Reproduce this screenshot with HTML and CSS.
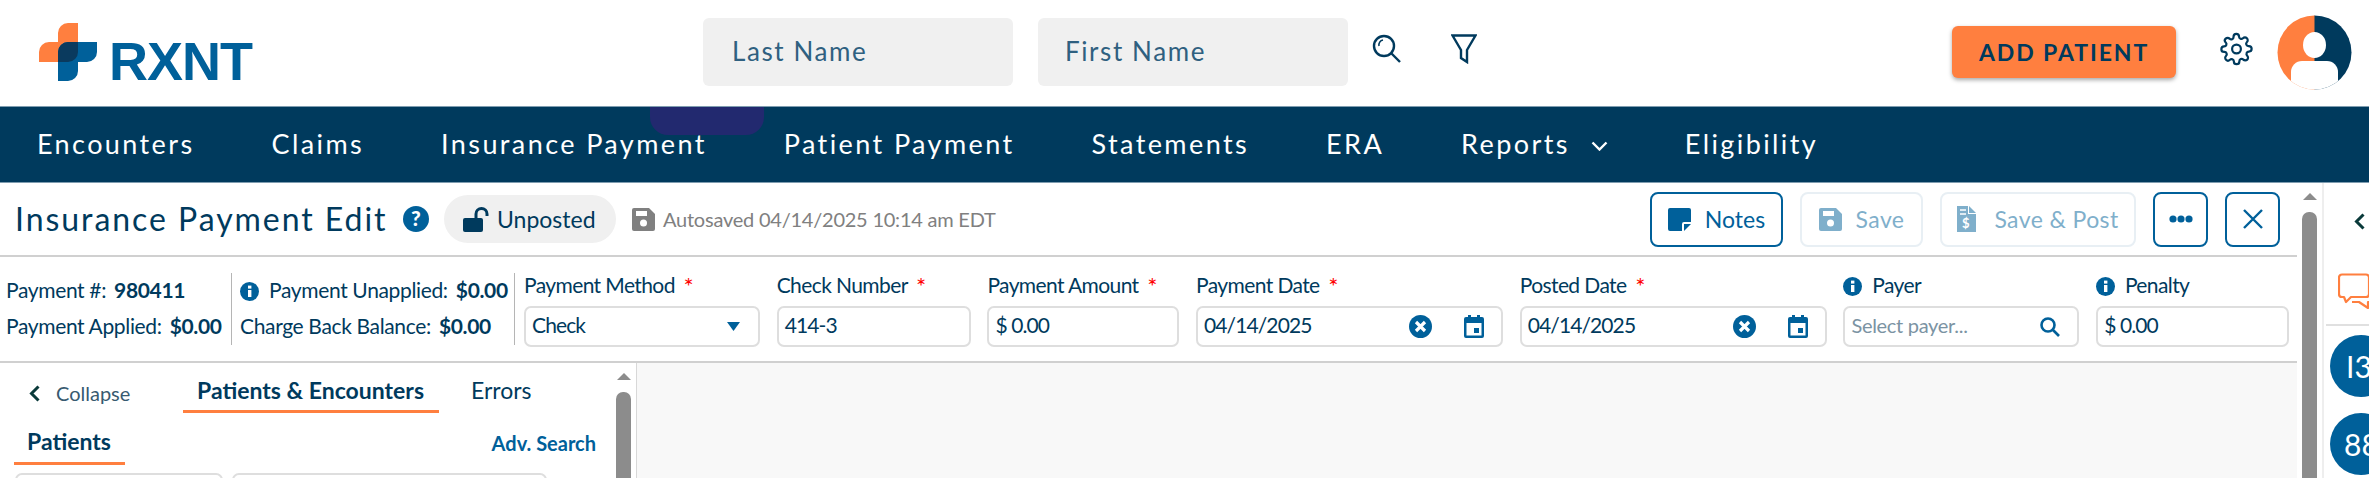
FILE: index.html
```html
<!DOCTYPE html>
<html lang="en">
<head>
    <meta charset="UTF-8">
    <title>Insurance Payment Edit</title>
    <link rel="stylesheet" href="styles.css">
</head>
<body>

<header class="topbar">
    <div class="logo">
        <svg width="58" height="58" viewBox="0 0 58 58">
            <path fill="#ff7f3f" d="M29 0H39V29a10 10 0 0 1-10 10H0V29a10 10 0 0 1 10-10H19V10a10 10 0 0 1 10-10z"/>
            <path fill="#00609a" d="M29 19H58V29a10 10 0 0 1-10 10H39V48a10 10 0 0 1-10 10H19V29a10 10 0 0 1 10-10z"/>
            <path fill="#0a3a5e" d="M29 19H39V29a10 10 0 0 1-10 10H19V29a10 10 0 0 1 10-10z"/>
        </svg>
        <span class="logo-text">RXNT</span>
    </div>
    <div class="top-search">
        <div class="name-box name-last">Last Name</div>
        <div class="name-box name-first">First Name</div>
        <svg class="search-glass" width="30" height="30" viewBox="0 0 30 30" fill="none" stroke="#003a5d" stroke-width="2.4">
            <ellipse cx="12" cy="12" rx="10" ry="10"/>
            <path d="M19 19l9 9"/>
            <path d="M7 12a5 5 0 0 1 4-6" stroke-width="1.6"/>
        </svg>
        <svg class="funnel" width="26" height="30" viewBox="0 0 26 30" fill="none" stroke="#003a5d" stroke-width="2.4">
            <path d="M1.5 1.5H24.5L16 16V28L10 24V16z"/>
        </svg>
    </div>
    <div class="top-actions">
        <div class="add-patient">ADD PATIENT</div>
        <svg class="gear" width="33" height="34" viewBox="0 0 24 24" fill="none" stroke="#003a5d" stroke-width="1.6" stroke-linejoin="round">
            <circle cx="12" cy="12" r="3.2"/>
            <path d="M19.4 15a1.65 1.65 0 0 0 .33 1.82l.06.06a2 2 0 1 1-2.83 2.83l-.06-.06a1.65 1.65 0 0 0-2.82 1.17V21a2 2 0 1 1-4 0v-.09a1.65 1.65 0 0 0-2.82-1.11l-.06.06a2 2 0 1 1-2.83-2.83l.06-.06a1.65 1.65 0 0 0-1.17-2.82H3a2 2 0 1 1 0-4h.09a1.65 1.65 0 0 0 1.11-2.82l-.06-.06a2 2 0 1 1 2.83-2.83l.06.06a1.65 1.65 0 0 0 2.82-1.17V3a2 2 0 1 1 4 0v.09a1.65 1.65 0 0 0 2.82 1.11l.06-.06a2 2 0 1 1 2.83 2.83l-.06.06a1.65 1.65 0 0 0 1.17 2.82H21a2 2 0 1 1 0 4h-.09a1.65 1.65 0 0 0-1.51 1z"/>
        </svg>
        <svg class="avatar" width="75" height="75" viewBox="0 0 75 75">
            <defs><clipPath id="avatar-clip"><circle cx="37.5" cy="37.5" r="37"/></clipPath></defs>
            <g clip-path="url(#avatar-clip)">
                <rect width="38" height="75" fill="#ff7f3f"/>
                <rect x="37.5" width="38" height="75" fill="#003a5d"/>
                <ellipse cx="37.5" cy="30" rx="11.5" ry="13" fill="#fff"/>
                <path fill="#fff" d="M14 75V57a11 11 0 0 1 11-11H50a11 11 0 0 1 11 11V75z"/>
            </g>
        </svg>
    </div>
</header>

<nav class="mainnav">
    <a>Encounters</a>
    <a>Claims</a>
    <a>Insurance Payment</a>
    <a>Patient Payment</a>
    <a>Statements</a>
    <a>ERA</a>
    <a class="has-menu">Reports<svg width="17" height="10" viewBox="0 0 17 10" fill="none" stroke="#fff" stroke-width="2.4"><path d="M1.5 1.5l7 7 7-7"/></svg></a>
    <a>Eligibility</a>
    <span class="nav-smudge"></span>
</nav>

<div class="workspace">
    <main class="main">
        <div class="title-row">
            <h1>Insurance Payment Edit</h1>
            <svg class="help" width="26" height="26" viewBox="0 0 26 26">
                <circle cx="13" cy="13" r="13" fill="#00609a"/>
                <text x="13" y="20" text-anchor="middle" class="help-mark">?</text>
            </svg>
            <div class="status-pill">
                <svg width="26" height="25" viewBox="0 0 26 25">
                    <path fill="#003a5d" d="M2 11h16a2 2 0 0 1 2 2v10a2 2 0 0 1-2 2H2a2 2 0 0 1-2-2V13a2 2 0 0 1 2-2z"/>
                    <path fill="none" stroke="#003a5d" stroke-width="3" d="M13 12V7a5.5 5.5 0 0 1 11 0v2"/>
                </svg>
                Unposted
            </div>
            <svg class="floppy" width="23" height="23" viewBox="0 0 23 23">
                <path fill="#808080" d="M2 0H17L23 6V21a2 2 0 0 1-2 2H2a2 2 0 0 1-2-2V2a2 2 0 0 1 2-2z"/>
                <rect x="4" y="3" width="11" height="5" fill="#fff"/>
                <circle cx="11.5" cy="15" r="3.5" fill="#fff"/>
            </svg>
            <span class="autosaved">Autosaved 04/14/2025 10:14 am EDT</span>
            <div class="title-actions">
                <button class="btn btn-notes">
                    <svg width="23" height="23" viewBox="0 0 23 23"><path fill="#00609a" d="M2 0H21a2 2 0 0 1 2 2V14H16a2 2 0 0 0-2 2V23H2a2 2 0 0 1-2-2V2a2 2 0 0 1 2-2z"/><path fill="#00609a" d="M16 16H23L16 23z"/></svg>
                    Notes
                </button>
                <button class="btn btn-off btn-save">
                    <svg width="23" height="23" viewBox="0 0 23 23"><path fill="#7fafcb" d="M2 0H17L23 6V21a2 2 0 0 1-2 2H2a2 2 0 0 1-2-2V2a2 2 0 0 1 2-2z"/><rect x="4" y="3" width="11" height="5" fill="#fff"/><circle cx="11.5" cy="15" r="3.5" fill="#fff"/></svg>
                    Save
                </button>
                <button class="btn btn-off btn-post">
                    <svg width="19" height="26" viewBox="0 0 19 26"><path fill="#7fafcb" d="M0 0H12L19 7V26H0z"/><path fill="#fff" d="M12 0v7h7v1h-8V0z"/><path stroke="#fff" stroke-width="1.4" d="M3 4h6M3 8h6"/><text x="9" y="22" text-anchor="middle" class="post-mark">$</text></svg>
                    Save &amp; Post
                </button>
                <button class="btn btn-square">
                    <svg width="24" height="8" viewBox="0 0 24 8" fill="#00609a"><circle cx="4" cy="4" r="3.6"/><circle cx="12" cy="4" r="3.6"/><circle cx="20" cy="4" r="3.6"/></svg>
                </button>
                <button class="btn btn-square">
                    <svg width="20" height="20" viewBox="0 0 20 20" fill="none" stroke="#00609a" stroke-width="2.4"><path d="M1 1l18 18M19 1L1 19"/></svg>
                </button>
            </div>
        </div>

        <div class="form-row">
            <div class="totals totals-first">
                <div>Payment #: <b>980411</b></div>
                <div>Payment Applied: <b>$0.00</b></div>
            </div>
            <div class="totals totals-second">
                <div class="with-info">
                    <svg class="info" width="19" height="19" viewBox="0 0 19 19"><circle cx="9.5" cy="9.5" r="9.5" fill="#00609a"/><rect x="8" y="8" width="3.4" height="7" fill="#fff"/><rect x="8" y="3.6" width="3.4" height="3" fill="#fff"/></svg>
                    Payment Unapplied: <b>$0.00</b>
                </div>
                <div>Charge Back Balance: <b>$0.00</b></div>
            </div>
            <div class="fields">
                <div class="field f-method">
                    <label>Payment Method <i>*</i></label>
                    <div class="box">Check
                        <svg class="box-end" width="13" height="9" viewBox="0 0 13 9"><path fill="#00609a" d="M0 0H13L6.5 9z"/></svg>
                    </div>
                </div>
                <div class="field f-check">
                    <label>Check Number <i>*</i></label>
                    <div class="box">414-3</div>
                </div>
                <div class="field f-amount">
                    <label>Payment Amount <i>*</i></label>
                    <div class="box">$ 0.00</div>
                </div>
                <div class="field f-date">
                    <label>Payment Date <i>*</i></label>
                    <div class="box">04/14/2025
                        <svg class="box-end" width="23" height="23" viewBox="0 0 23 23"><circle cx="11.5" cy="11.5" r="11.5" fill="#00609a"/><path d="M7 7l9 9M16 7l-9 9" stroke="#fff" stroke-width="3.2"/></svg>
                        <svg class="cal" width="20" height="23" viewBox="0 0 20 23"><path fill="#00609a" d="M2 2H4V0H7V2H13V0H16V2H18a2 2 0 0 1 2 2V21a2 2 0 0 1-2 2H2a2 2 0 0 1-2-2V4a2 2 0 0 1 2-2z"/><rect x="2.5" y="8" width="15" height="12.5" fill="#fff"/><rect x="10" y="13" width="5" height="5" fill="#00609a"/></svg>
                    </div>
                </div>
                <div class="field f-date">
                    <label>Posted Date <i>*</i></label>
                    <div class="box">04/14/2025
                        <svg class="box-end" width="23" height="23" viewBox="0 0 23 23"><circle cx="11.5" cy="11.5" r="11.5" fill="#00609a"/><path d="M7 7l9 9M16 7l-9 9" stroke="#fff" stroke-width="3.2"/></svg>
                        <svg class="cal" width="20" height="23" viewBox="0 0 20 23"><path fill="#00609a" d="M2 2H4V0H7V2H13V0H16V2H18a2 2 0 0 1 2 2V21a2 2 0 0 1-2 2H2a2 2 0 0 1-2-2V4a2 2 0 0 1 2-2z"/><rect x="2.5" y="8" width="15" height="12.5" fill="#fff"/><rect x="10" y="13" width="5" height="5" fill="#00609a"/></svg>
                    </div>
                </div>
                <div class="field f-payer">
                    <label class="with-info"><svg class="info" width="19" height="19" viewBox="0 0 19 19"><circle cx="9.5" cy="9.5" r="9.5" fill="#00609a"/><rect x="8" y="8" width="3.4" height="7" fill="#fff"/><rect x="8" y="3.6" width="3.4" height="3" fill="#fff"/></svg> Payer</label>
                    <div class="box box-placeholder">Select payer...
                        <svg class="box-end" width="20" height="20" viewBox="0 0 20 20" fill="none" stroke="#00609a" stroke-width="2.6"><circle cx="8" cy="8" r="6.5"/><path d="M13 13l6 6"/></svg>
                    </div>
                </div>
                <div class="field f-penalty">
                    <label class="with-info"><svg class="info" width="19" height="19" viewBox="0 0 19 19"><circle cx="9.5" cy="9.5" r="9.5" fill="#00609a"/><rect x="8" y="8" width="3.4" height="7" fill="#fff"/><rect x="8" y="3.6" width="3.4" height="3" fill="#fff"/></svg> Penalty</label>
                    <div class="box">$ 0.00</div>
                </div>
            </div>
        </div>

        <div class="split">
            <section class="left-panel">
                <div class="left-inner">
                    <div class="tabs">
                        <div class="collapse">
                            <svg width="11" height="17" viewBox="0 0 11 17" fill="none" stroke="#0a3a3a" stroke-width="3"><path d="M9.5 1.5l-7 7 7 7"/></svg>
                            Collapse
                        </div>
                        <div class="tab tab-active">Patients &amp; Encounters</div>
                        <div class="tab">Errors</div>
                    </div>
                    <div class="subtabs">
                        <div class="subtab">Patients</div>
                        <a class="adv-search">Adv. Search</a>
                    </div>
                    <div class="search-boxes">
                        <div class="mini-box mini-a"></div>
                        <div class="mini-box mini-b"></div>
                    </div>
                </div>
                <div class="scroll scroll-left">
                    <span class="scroll-arrow"></span>
                    <span class="scroll-thumb"></span>
                </div>
            </section>
            <section class="content"></section>
        </div>
    </main>

    <div class="scroll scroll-main">
        <span class="scroll-arrow"></span>
        <span class="scroll-thumb"></span>
    </div>

    <aside class="sidebar">
        <svg class="side-back" width="11" height="17" viewBox="0 0 11 17" fill="none" stroke="#0a3a3a" stroke-width="3"><path d="M9.5 1.5l-7 7 7 7"/></svg>
        <div class="side-chat">
            <svg width="42" height="36" viewBox="0 0 42 36" fill="none" stroke="#ff7f3f" stroke-width="2.2" stroke-linejoin="round">
                <path d="M4 1.5H28a3 3 0 0 1 3 3V21a3 3 0 0 1-3 3H13L8 29 6 24H4a3 3 0 0 1-3-3V4.5a3 3 0 0 1 3-3z"/>
                <path d="M31 6H38a3 3 0 0 1 3 3V26a3 3 0 0 1-3 3H30V35L21 29H14"/>
            </svg>
        </div>
        <div class="bubble">I3</div>
        <div class="bubble">88</div>
    </aside>
</div>

</body>
</html>
```

FILE: styles.css
```css
* {
    box-sizing: border-box;
}

html, body {
    margin: 0;
    padding: 0;
    height: 100%;
    overflow: hidden;
}

body {
    font-family: Lato, "Open Sans", sans-serif;
    color: #003a5d;
    background-color: white;
    width: 2369px;
    height: 478px;
    display: flex;
    flex-direction: column;
}

/* top bar */

.topbar {
    height: 106px;
    flex: none;
    display: flex;
    align-items: flex-start;
    position: relative;
}

.logo {
    display: flex;
    align-items: flex-start;
    margin: 23px 0 0 39px;
    width: 664px;
}

.logo-text {
    font-family: "Liberation Sans", sans-serif;
    font-weight: bold;
    font-size: 54px;
    line-height: 39px;
    margin: 19px 0 0 12px;
    color: #00609a;
    letter-spacing: -1px;
}

.top-search {
    display: flex;
    align-items: flex-start;
}

.name-box {
    margin-top: 18px;
    height: 68px;
    width: 310px;
    background-color: #f0f0f0;
    border-radius: 6px;
    padding-left: 29px;
    font-size: 26px;
    line-height: 66px;
    letter-spacing: 1.6px;
    color: #2f6080;
}

.name-first {
    margin-left: 25px;
    padding-left: 27px;
}

.search-glass {
    margin: 34px 0 0 24px;
}

.funnel {
    margin: 34px 0 0 49px;
}

.top-actions {
    display: flex;
    align-items: flex-start;
    margin-left: 475px;
}

.add-patient {
    margin-top: 26px;
    width: 224px;
    height: 52px;
    background-color: #ff7f3f;
    border-radius: 6px;
    box-shadow: 0 2px 4px rgba(0, 0, 0, 0.35);
    text-align: center;
    line-height: 52px;
    font-size: 23px;
    font-weight: 700;
    letter-spacing: 1.9px;
    color: #003a5d;
}

.gear {
    margin: 32px 0 0 44px;
}

.avatar {
    margin: 15px 0 0 24px;
}

/* main nav */

.mainnav {
    height: 77px;
    flex: none;
    display: flex;
    align-items: center;
    gap: 77px;
    padding: 0 0 2px 37px;
    background-color: #003a5d;
    border-top: 1px solid #7f9db0;
    border-bottom: 1px solid #7f9db0;
    position: relative;
}

.mainnav a {
    color: white;
    font-size: 27px;
    letter-spacing: 2.4px;
}

.mainnav .has-menu svg {
    margin-left: 21px;
    vertical-align: 3px;
}

.nav-smudge {
    position: absolute;
    left: 650px;
    top: 0;
    width: 114px;
    height: 28px;
    background-color: #22296f;
    border-radius: 0 0 18px 18px;
}

/* page body */

.workspace {
    flex: 1;
    min-height: 0;
    display: flex;
}

.main {
    width: 2297px;
    flex: none;
    display: flex;
    flex-direction: column;
}

.title-row {
    height: 74px;
    flex: none;
    display: flex;
    align-items: center;
    padding-left: 15px;
    border-bottom: 2px solid #d0d0d0;
}

h1 {
    margin: 0 0 2px;
    font-size: 32px;
    font-weight: 400;
    letter-spacing: 1.95px;
    color: #003a5d;
    width: 388px;
    white-space: nowrap;
}

.help-mark {
    font-family: Lato, sans-serif;
    font-size: 21px;
    font-weight: 900;
    fill: white;
}

.status-pill {
    margin-left: 15px;
    width: 172px;
    height: 48px;
    border-radius: 24px;
    background-color: #f0f0f0;
    display: flex;
    align-items: center;
    gap: 8px;
    padding-left: 19px;
    font-size: 23px;
    color: #003a5d;
}

.floppy {
    margin-left: 16px;
}

.autosaved {
    margin-left: 8px;
    font-size: 20px;
    letter-spacing: -0.23px;
    color: #808080;
}

.title-actions {
    margin-left: auto;
    display: flex;
    gap: 17px;
    padding-right: 17px;
}

.btn {
    height: 55px;
    padding: 0;
    display: flex;
    align-items: center;
    justify-content: center;
    gap: 14px;
    background-color: white;
    border: 2px solid #00609a;
    border-radius: 8px;
    font-family: inherit;
    font-size: 23px;
    color: #00609a;
}

.btn-notes {
    width: 133px;
}

.btn-off {
    border-color: #e8eff4;
    color: #7fafcb;
    letter-spacing: 0.4px;
}

.btn-save {
    width: 123px;
}

.btn-post {
    width: 196px;
    gap: 18px;
}

.btn-square {
    width: 55px;
}

.post-mark {
    font-family: Lato, sans-serif;
    font-size: 13px;
    font-weight: 700;
    fill: white;
}

/* form row */

.form-row {
    height: 106px;
    flex: none;
    display: flex;
    align-items: flex-start;
    border-bottom: 2px solid #d0d0d0;
    font-size: 21px;
}

.totals {
    margin-top: 16px;
    height: 72px;
    display: flex;
    flex-direction: column;
    justify-content: space-between;
    padding: 5px 0 7px;
    line-height: 24px;
    letter-spacing: -0.35px;
    white-space: nowrap;
    border-right: 1px solid #b5b5b5;
}

.totals b {
    font-weight: 700;
    margin-left: 3px;
}

.totals-first {
    width: 232px;
    padding-left: 6px;
}

.totals-second {
    width: 283px;
    padding-left: 8px;
}

.with-info .info {
    vertical-align: -3px;
    margin-right: 5px;
}

.fields {
    display: flex;
    gap: 16.7px;
    margin-left: 9px;
}

.field {
    display: flex;
    flex-direction: column;
}

.field label {
    height: 49px;
    line-height: 55px;
    font-size: 21px;
    letter-spacing: -0.6px;
    white-space: nowrap;
}

.field label i {
    color: red;
    font-style: normal;
    font-size: 24px;
    line-height: 20px;
    vertical-align: -2px;
    margin-left: 4px;
}

.f-method {
    width: 236px;
}

.f-check {
    width: 194px;
}

.f-amount {
    width: 192px;
}

.f-date {
    width: 307px;
}

.f-payer {
    width: 236px;
}

.f-penalty {
    width: 193px;
}

.box {
    height: 41px;
    border: 2px solid #dedede;
    border-radius: 7px;
    display: flex;
    align-items: center;
    padding: 0 6px 4px;
    font-size: 21px;
    letter-spacing: -0.9px;
    color: #003a5d;
}

.box svg {
    flex: none;
    margin-top: 4px;
}

.box-end {
    margin-left: auto;
    margin-right: 12px;
}

.cal {
    margin-right: 11px;
    margin-left: 32px;
}

.f-date .box-end {
    margin-right: 0;
}

.f-payer .box-end {
    margin-right: 11px;
}

.box-placeholder {
    color: #7b93a3;
    font-size: 20px;
    letter-spacing: -0.3px;
}

/* lower split */

.split {
    flex: 1;
    min-height: 0;
    display: flex;
}

.left-panel {
    width: 637px;
    flex: none;
    display: flex;
    justify-content: space-between;
    padding-right: 5px;
    border-right: 1px solid #d8d8d8;
    overflow: hidden;
}

.left-inner {
    width: 612px;
}

.tabs {
    display: flex;
    align-items: flex-start;
    height: 50px;
}

.collapse {
    width: 183px;
    padding: 18px 0 0 29px;
    font-size: 20px;
    color: #385a70;
    display: flex;
    align-items: center;
    gap: 16px;
}

.tab {
    padding: 13px 14px 0;
    height: 50px;
    font-size: 23px;
    color: #003a5d;
    white-space: nowrap;
}

.tab-active {
    font-weight: 700;
    width: 256px;
    border-bottom: 3px solid #ff7f3f;
    margin-right: 18px;
}

.subtabs {
    display: flex;
    justify-content: space-between;
    align-items: flex-start;
    height: 52px;
    padding-left: 14px;
}

.subtab {
    width: 111px;
    height: 52px;
    padding: 14px 0 0 13px;
    font-size: 23px;
    font-weight: 700;
    border-bottom: 3px solid #ff7f3f;
}

.adv-search {
    margin: 18px 16px 0 0;
    font-size: 20px;
    font-weight: 700;
    color: #00609a;
}

.search-boxes {
    display: flex;
    gap: 9px;
    padding: 8px 0 0 15px;
}

.mini-box {
    height: 40px;
    border: 2px solid #dedede;
    border-radius: 7px;
}

.mini-a {
    width: 208px;
}

.mini-b {
    width: 315px;
}

.content {
    flex: 1;
    background-color: #f8f8f8;
}

/* scrollbars */

.scroll {
    flex: none;
    width: 15px;
    display: flex;
    flex-direction: column;
    align-items: center;
}

.scroll-arrow {
    width: 0;
    height: 0;
    border-left: 7.5px solid transparent;
    border-right: 7.5px solid transparent;
    border-bottom: 7px solid #8c8c8c;
}

.scroll-thumb {
    flex: 1;
    width: 15px;
    margin-top: 12px;
    background-color: #8c8c8c;
    border-radius: 7px 7px 0 0;
}

.scroll-left {
    padding-top: 10px;
}

.scroll-main {
    margin-left: 5px;
    padding-top: 10px;
}

/* right rail */

.sidebar {
    margin-left: 5px;
    flex: 1;
    min-width: 0;
    border-left: 2px solid #eee;
    overflow: hidden;
}

.side-back {
    display: block;
    margin: 30px 0 0 30px;
}

.side-chat {
    margin: 43px 0 0 2px;
    height: 53px;
    border-bottom: 2px solid #e0e0e0;
    padding: 0 0 0 12px;
    width: 60px;
}

.bubble {
    width: 62px;
    height: 62px;
    border-radius: 50%;
    background-color: #00609a;
    color: white;
    font-size: 30px;
    line-height: 62px;
    margin: 9px 0 0 6px;
    padding-left: 16px;
    white-space: nowrap;
}

.bubble + .bubble {
    margin-top: 16px;
    padding-left: 14px;
}
```
